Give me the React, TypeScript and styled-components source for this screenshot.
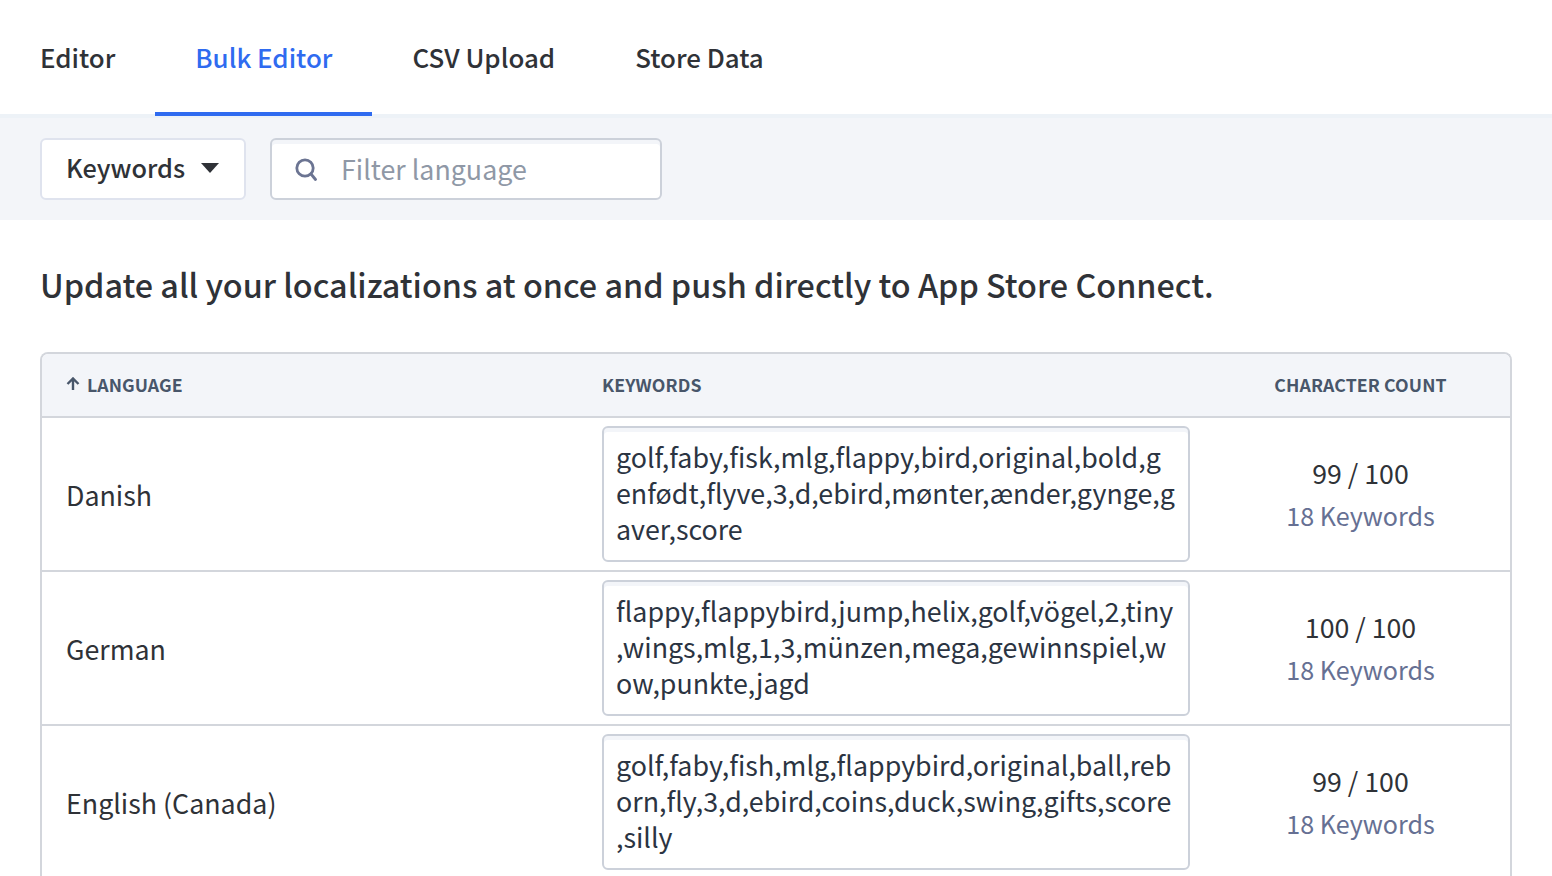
import React from "react";
import styled, { createGlobalStyle } from "styled-components";

const FONT = `"Noto Sans CJK JP", "Noto Sans", sans-serif`;

const GlobalStyle = createGlobalStyle`
  html, body {
    margin: 0;
    height: 100%;
    overflow: hidden;
    background: #fff;
    font-family: ${FONT};
    color: #2f3237;
  }
  * { box-sizing: border-box; }
`;

const Page = styled.div`
  width: 1552px;
  height: 876px;
  overflow: hidden;
`;

const Tabs = styled.nav`
  display: flex;
  height: 114px;
  background: #fff;
`;

const Tab = styled.div<{ active?: boolean }>`
  height: 116px;
  padding: 0 40px;
  display: flex;
  align-items: center;
  font-size: 25.9px;
  font-weight: 500;
  color: ${({ active }) => (active ? "#2f6bf0" : "#2f3237")};
  border-bottom: 4px solid ${({ active }) => (active ? "#2f6bf0" : "transparent")};
  position: relative;
  z-index: 1;
`;

const Toolbar = styled.div`
  height: 106px;
  background: #f3f5f9;
  border-top: 4px solid #edf2f7;
  padding: 20px 40px 0;
  display: flex;
  gap: 24px;
`;

const Dropdown = styled.div`
  width: 206px;
  height: 62px;
  background: #fff;
  border: 2px solid #dfe3ee;
  border-radius: 6px;
  display: flex;
  align-items: center;
  padding: 0 0 4px 24px;
  gap: 16px;
  font-size: 25.3px;
  font-weight: 500;
`;

const Caret = styled.span`
  width: 0;
  height: 0;
  margin-top: 2px;
  border-left: 9px solid transparent;
  border-right: 9px solid transparent;
  border-top: 10px solid #2f3237;
`;

const Search = styled.div`
  width: 392px;
  height: 62px;
  background: #fff;
  border: 2px solid #ccd1da;
  box-shadow: inset 0 4px 0 #f3f5f9;
  border-radius: 6px;
  display: flex;
  align-items: center;
  padding: 0 0 1px 22px;
  gap: 23px;
  font-size: 26.8px;
  color: #8f98a6;
`;

const Intro = styled.h1`
  margin: 0;
  padding: 42px 40px 0;
  height: 132px;
  font-size: 32.35px;
  line-height: 44px;
  font-weight: 500;
  color: #2f3237;
`;

const Table = styled.div`
  margin: 0 40px;
  border: 2px solid #d3d6dc;
  border-bottom: none;
  border-radius: 8px 8px 0 0;
`;

const Grid = styled.div`
  display: grid;
  grid-template-columns: 560px 587px 1fr;
  align-items: center;
`;

const Head = styled(Grid)`
  height: 62px;
  padding-bottom: 3px;
  background: #f3f5f9;
  border-radius: 6px 6px 0 0;
  font-size: 17.7px;
  font-weight: 700;
  color: #48566a;
  letter-spacing: 0.1px;
`;

const HeadCell = styled.div<{ center?: boolean }>`
  display: flex;
  align-items: center;
  gap: 7px;
  padding-left: ${({ center }) => (center ? "22px" : "24px")};
  justify-content: ${({ center }) => (center ? "center" : "flex-start")};
`;

const KeywordsHead = styled.div`
  padding-left: 0;
`;

const Row = styled(Grid)`
  height: 154px;
  border-top: 2px solid #d3d6dc;
`;

const Language = styled.div`
  padding-left: 24px;
  font-size: 26.8px;
`;

const Field = styled.div`
  width: 588px;
  height: 136px;
  background: #fff;
  border: 2px solid #ccd1da;
  box-shadow: inset 0 4px 0 #f3f5f9;
  border-radius: 6px;
  padding: 11px 12px 0;
  font-size: 26.8px;
  line-height: 36px;
  color: #2b3442;
`;

const FieldLine = styled.div`
  white-space: nowrap;
`;

const Count = styled.div`
  padding-left: 22px;
  text-align: center;
  font-size: 26.7px;
  line-height: 42px;
`;

const KeywordCount = styled.div`
  color: #667093;
  font-size: 25.1px;
`;

const rows = [
  {
    language: "Danish",
    keywords: ["golf,faby,fisk,mlg,flappy,bird,original,bold,g", "enfødt,flyve,3,d,ebird,mønter,ænder,gynge,g", "aver,score"],
    count: "99 / 100",
  },
  {
    language: "German",
    keywords: ["flappy,flappybird,jump,helix,golf,vögel,2,tiny", ",wings,mlg,1,3,münzen,mega,gewinnspiel,w", "ow,punkte,jagd"],
    count: "100 / 100",
  },
  {
    language: "English (Canada)",
    keywords: ["golf,faby,fish,mlg,flappybird,original,ball,reb", "orn,fly,3,d,ebird,coins,duck,swing,gifts,score", ",silly"],
    count: "99 / 100",
  },
];

const SearchIcon = () => (
  <svg width="24" height="24" viewBox="0 0 24 24" fill="none" stroke="#6b7492" strokeWidth="2.8" strokeLinecap="round">
    <circle cx="11" cy="11" r="8.2" />
    <path d="M17 17l4.5 5.5" />
  </svg>
);

const ArrowUp = () => (
  <svg width="14" height="14" viewBox="0 0 14 14" fill="none" stroke="#48566a" strokeWidth="2.4">
    <path d="M7 13V2M1.5 7L7 1.5 12.5 7" />
  </svg>
);

export default function App() {
  return (
    <Page>
      <GlobalStyle />
      <Tabs>
        <Tab>Editor</Tab>
        <Tab active>Bulk Editor</Tab>
        <Tab>CSV Upload</Tab>
        <Tab>Store Data</Tab>
      </Tabs>
      <Toolbar>
        <Dropdown>
          Keywords
          <Caret />
        </Dropdown>
        <Search>
          <SearchIcon />
          Filter language
        </Search>
      </Toolbar>
      <Intro>Update all your localizations at once and push directly to App Store Connect.</Intro>
      <Table>
        <Head>
          <HeadCell>
            <ArrowUp />
            LANGUAGE
          </HeadCell>
          <KeywordsHead>KEYWORDS</KeywordsHead>
          <HeadCell center>CHARACTER COUNT</HeadCell>
        </Head>
        {rows.map((row) => (
          <Row key={row.language}>
            <Language>{row.language}</Language>
            <Field>
              {row.keywords.map((line) => (
                <FieldLine key={line}>{line}</FieldLine>
              ))}
            </Field>
            <Count>
              {row.count}
              <KeywordCount>18 Keywords</KeywordCount>
            </Count>
          </Row>
        ))}
      </Table>
    </Page>
  );
}
